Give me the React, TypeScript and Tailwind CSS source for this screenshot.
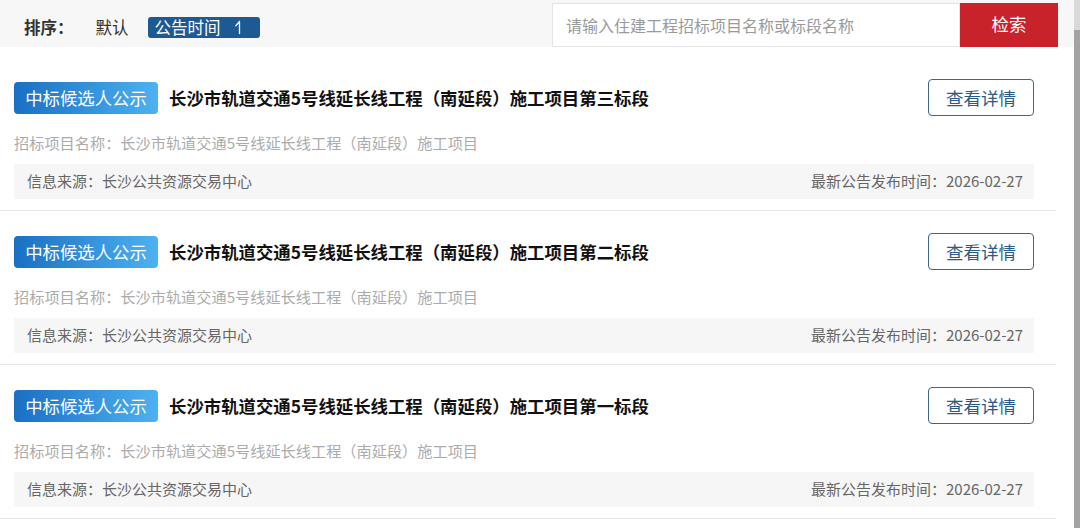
import React from "react";

const items = ["第三标段", "第二标段", "第一标段"];

function Item({ suffix }: { suffix: string }) {
  return (
    <div className="pt-[22px] pb-[11px] pl-[14px] pr-[22px] border-b border-[#e6e6e6]">
      <div className="flex items-center h-[37px]">
        <div className="h-[32px] w-[144px] flex items-center justify-center rounded-[4px] bg-gradient-to-r from-[#1a6fc2] to-[#4db2f1] text-white text-[17.4px] leading-none">
          中标候选人公示
        </div>
        <div className="ml-[11px] text-[17.4px] font-bold text-[#111] leading-none">
          长沙市轨道交通5号线延长线工程（南延段）施工项目{suffix}
        </div>
        <div className="ml-auto w-[106px] h-[37px] border border-[#3d6788] rounded-[4px] flex items-center justify-center text-[17.5px] text-[#2a5a86] leading-none">
          查看详情
        </div>
      </div>
      <div className="mt-[16px] mb-[12px] h-[20px] leading-[20px] text-[15.2px] text-[#ababab]">
        招标项目名称：长沙市轨道交通5号线延长线工程（南延段）施工项目
      </div>
      <div className="h-[35px] bg-[#f6f6f6] flex items-center justify-between pl-[13px] pr-[11px] text-[15px] text-[#666]">
        <span>信息来源：长沙公共资源交易中心</span>
        <span>最新公告发布时间：2026-02-27</span>
      </div>
    </div>
  );
}

export default function App() {
  return (
    <div
      className="w-[1080px] h-[528px] overflow-hidden bg-white flex"
      style={{ fontFamily: '"Noto Sans CJK SC", "Noto Sans", sans-serif' }}
    >
      <div className="w-[1074px] flex flex-col">
        <div className="h-[47px] bg-[#f7f7f7] flex items-center pr-[16px]">
          <div className="flex items-center mt-[7px]">
            <span className="ml-[24px] text-[16.5px] font-bold text-[#333]">排序：</span>
            <span className="ml-[22px] text-[16.5px] text-[#333]">默认</span>
            <span className="ml-[19px] h-[21px] w-[112px] rounded-[3px] bg-[#1d5a93] text-white text-[16.5px] leading-none flex items-center pl-[7px]">
              公告时间
              <svg className="ml-[13px]" width="10" height="15" viewBox="0 0 10 15" fill="none">
                <path d="M5.5 1.5V13.5M5.5 1.5L1.8 5.8" stroke="white" strokeWidth="1.3" strokeLinecap="round" />
              </svg>
            </span>
          </div>
          <div className="ml-auto flex h-[44px] mt-[2px]">
            <div className="w-[408px] h-full bg-white border border-[#e3e3e3] flex items-center pl-[13px] text-[16px] text-[#9a9a9a]">
              请输入住建工程招标项目名称或标段名称
            </div>
            <div className="w-[98px] h-full bg-[#c8222a] text-white text-[17.5px] flex items-center justify-center">
              检索
            </div>
          </div>
        </div>
        <div className="mt-[10px] w-[1056px]">
          {items.map((s) => (
            <Item key={s} suffix={s} />
          ))}
        </div>
      </div>
      <div className="w-[6px] flex flex-col">
        <div className="h-[30px] bg-[#d9d9d9]" />
        <div className="flex-1 bg-[#a3a3a3]" />
      </div>
    </div>
  );
}
